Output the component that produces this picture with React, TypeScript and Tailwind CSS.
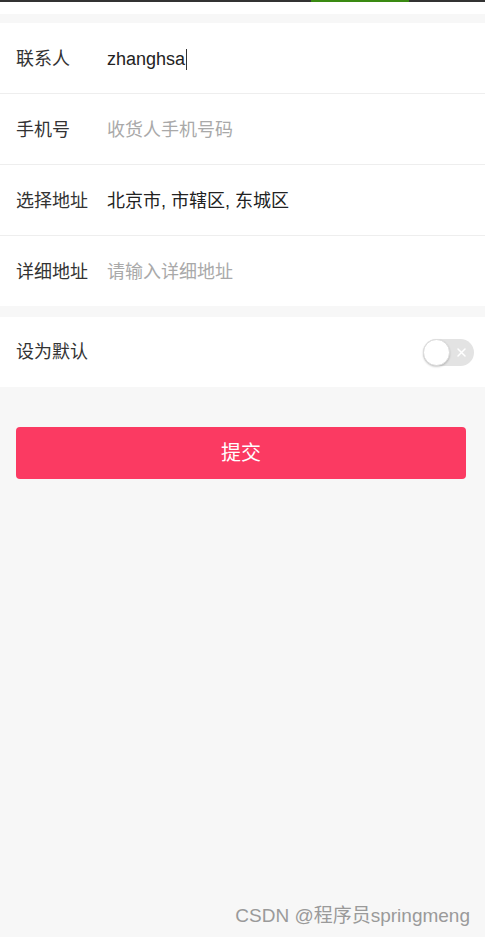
const font = { fontFamily: '"Liberation Sans", "Noto Sans CJK SC", sans-serif' };

function Row({
  label,
  value,
  placeholder,
  caret,
  last,
}: {
  label: string;
  value?: string;
  placeholder?: string;
  caret?: boolean;
  last?: boolean;
}) {
  return (
    <div
      className={`flex items-center pl-4 pt-[3px] ${last ? "h-[70px]" : "h-[71px] border-b border-[#eeeeee]"}`}
    >
      <span className="w-[91px] text-[18px] text-[#333333]">{label}</span>
      {value ? (
        <span className="flex items-center text-[18px] text-[#222222]">
          {value}
          {caret && <span className="ml-[1px] w-[1px] h-[21px] bg-[#333333]" />}
        </span>
      ) : (
        <span className="text-[18px] text-[#a9a9a9]">{placeholder}</span>
      )}
    </div>
  );
}

export default function App() {
  return (
    <div className="relative min-h-[937px] bg-[#f7f7f7]" style={font}>
      {/* status line */}
      <div className="flex h-[2px] bg-[#333333]">
        <div className="ml-[311px] w-[98px] bg-[#3a8a12]" />
      </div>
      <div className="h-[12px] bg-white" />
      <div className="h-[9px]" />

      {/* form */}
      <div className="bg-white">
        <Row label="联系人" value="zhanghsa" caret />
        <Row label="手机号" placeholder="收货人手机号码" />
        <Row label="选择地址" value="北京市, 市辖区, 东城区" />
        <Row label="详细地址" placeholder="请输入详细地址" last />
      </div>

      <div className="h-[11px]" />

      <div className="flex items-center justify-between h-[70px] bg-white pl-4 pr-[11px]">
        <span className="text-[18px] text-[#333333]">设为默认</span>
        <div className="relative w-[51px] h-[27px] rounded-full bg-[#e3e3e3]">
          <div className="absolute left-0 top-0 w-[27px] h-[27px] rounded-full bg-white border border-[#dcdcdc] shadow-[0_1px_2px_rgba(0,0,0,0.2)]" />
          <svg
            className="absolute right-[7px] top-[8px]"
            width="11"
            height="11"
            viewBox="0 0 11 11"
          >
            <path d="M2 2 L9 9 M9 2 L2 9" stroke="#ffffff" strokeWidth="1.5" strokeLinecap="round" />
          </svg>
        </div>
      </div>

      <div className="pt-10 pl-4">
        <button className="flex items-center justify-center w-[450px] h-[52px] rounded-[4px] bg-[#fb3a62] text-white text-[20px]">
          提交
        </button>
      </div>

      <div className="absolute right-[15px] bottom-[7px] text-[19px] text-[#9a9a9a]">
        CSDN @程序员springmeng
      </div>
    </div>
  );
}
